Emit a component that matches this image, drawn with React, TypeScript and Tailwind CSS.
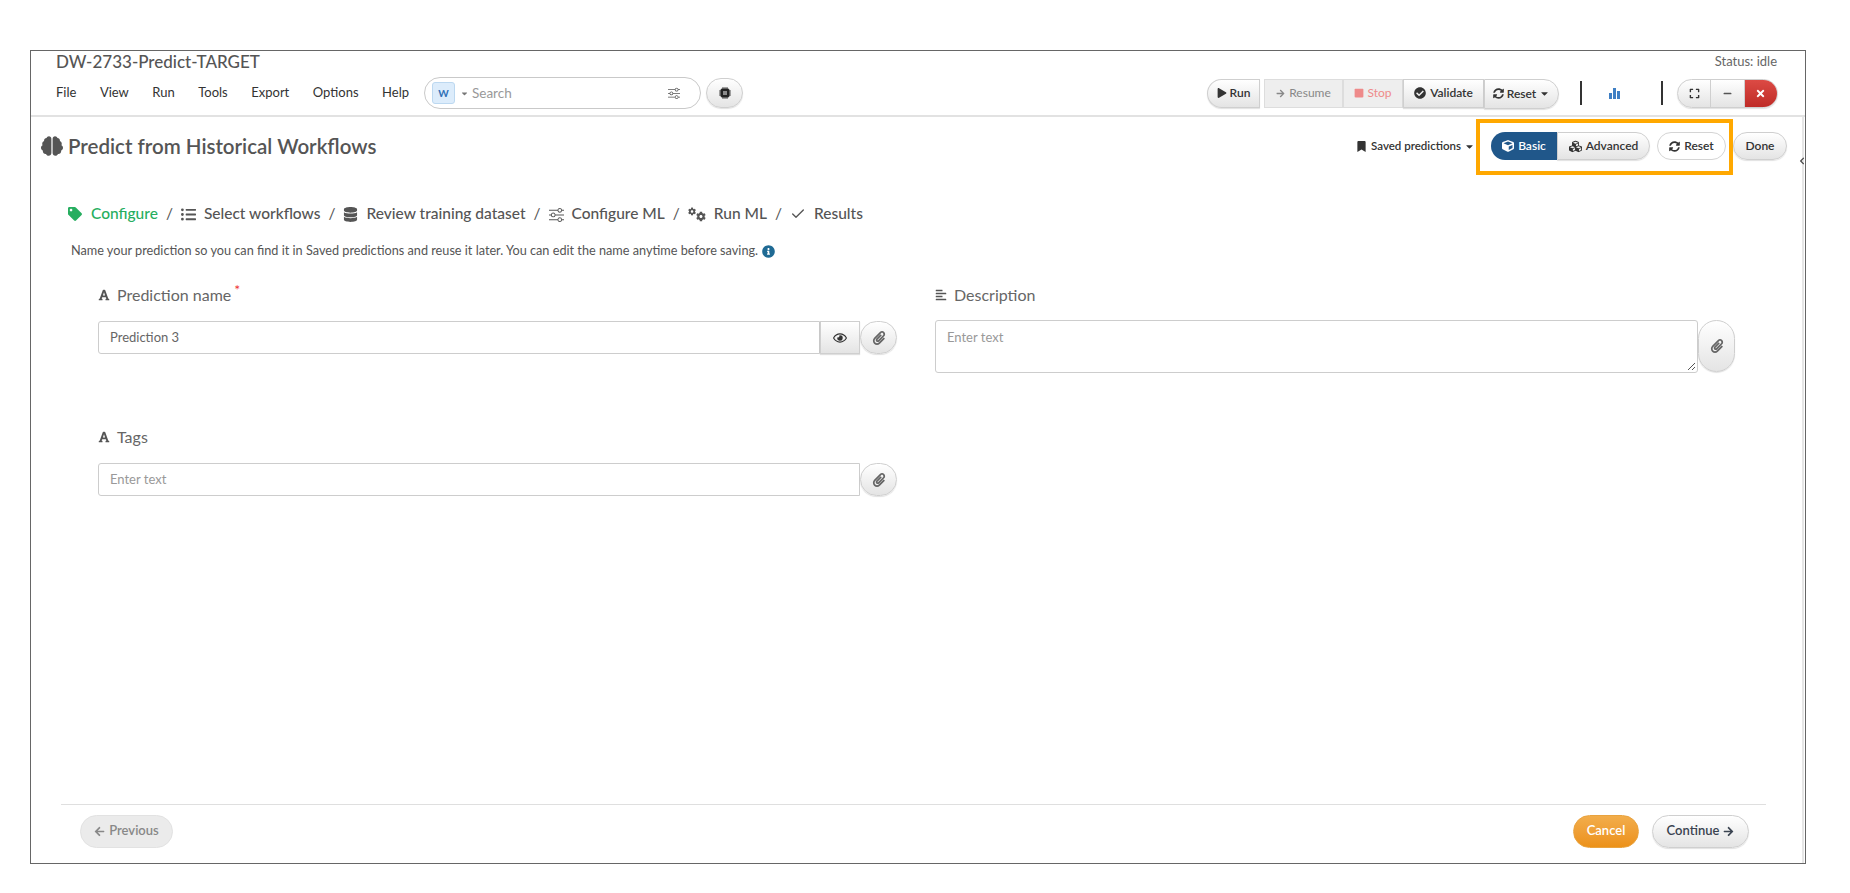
import { Check } from 'lucide-react';
import { BsSliders } from 'react-icons/bs';
import { FaAlignLeft, FaArrowLeft, FaArrowRight, FaBookmark, FaBrain, FaCaretDown, FaCheckCircle, FaChevronLeft, FaCog, FaCube, FaCubes, FaDatabase, FaExpand, FaFont, FaInfoCircle, FaListUl, FaMinus, FaPaperclip, FaPlay, FaRegEye, FaSquare, FaSyncAlt, FaTag, FaTimes } from 'react-icons/fa';

const menuItems = ['File', 'View', 'Run', 'Tools', 'Export', 'Options', 'Help'];

const steps = [
  { label: 'Select workflows', icon: <FaListUl /> },
  { label: 'Review training dataset', icon: <FaDatabase /> },
  { label: 'Configure ML', icon: <BsSliders /> },
  {
    label: 'Run ML',
    icon: (
      <span className="flex h-[15px] w-[18px]">
        <FaCog className="text-[9px] self-start" />
        <FaCog className="text-[11px] self-end" />
      </span>
    ),
  },
  { label: 'Results', icon: <Check size={16} strokeWidth={2} /> },
];

const glossy = 'bg-gradient-to-b from-white to-[#e4e4e4] border border-[#cfcfcf] shadow-[0_1px_1px_rgba(0,0,0,0.12)]';

const ClipButton = ({ tall }: { tall?: boolean }) => (
  <button className={`w-[37px] ${tall ? 'h-[52px]' : 'h-[33px]'} shrink-0 rounded-full flex items-center justify-center text-[14px] text-[#666] ${glossy}`}>
    <FaPaperclip />
  </button>
);

const FieldLabel = ({ icon, children }: { icon: React.ReactNode; children: React.ReactNode }) => (
  <div className="flex items-center gap-[7px] h-[20px] text-[16px] text-[#666]">
    <span className="text-[12px] text-[#555]">{icon}</span>
    {children}
  </div>
);

export default function App() {
  return (
    <div className="w-[1850px] h-[893px] bg-white pt-[50px] pl-[30px] overflow-hidden font-['Lato',sans-serif]">
      <div className="relative w-[1776px] h-[814px] border border-[#666] flex flex-col">
        {/* top bar */}
        <header className="h-[66px] shrink-0 border-b-2 border-[#e2e2e2] pl-[25px] pr-[28px]">
          <div className="flex items-center justify-between h-[22px]">
            <h1 className="text-[17px] font-medium text-[#555]">DW-2733-Predict-TARGET</h1>
            <span className="text-[13px] text-[#666]">Status: idle</span>
          </div>
          <div className="flex items-center h-[32px] mt-[4px]">
            <nav className="flex gap-[23.5px] text-[13px] text-[#333]">
              {menuItems.map((m) => (
                <span key={m}>{m}</span>
              ))}
            </nav>
            <div className="ml-[15px] w-[277px] h-[32px] rounded-full border border-[#c9c9c9] flex items-center pl-[7px] pr-[20px]">
              <span className="w-[23px] h-[22px] rounded-[3px] bg-[#dcecfb] border border-[#bcd8f0] flex items-center justify-center text-[10px] font-bold text-[#2f6fb5]">W</span>
              <FaCaretDown className="ml-[5px] text-[9px] text-[#777]" />
              <span className="ml-[3px] text-[13.5px] text-[#999]">Search</span>
              <BsSliders className="ml-auto text-[12px] text-[#555]" />
            </div>
            <button className={`ml-[5px] w-[37px] h-[30px] rounded-full flex items-center justify-center ${glossy}`}>
              <svg width="12" height="12" viewBox="0 0 12 12" fill="none" stroke="#222">
                <rect x="2" y="2" width="8" height="8" rx="1" fill="#222" />
                <rect x="4" y="4" width="4" height="4" fill="#8a8a8a" stroke="none" />
                <path d="M4 0v2M6 0v2M8 0v2M4 10v2M6 10v2M8 10v2M0 4h2M0 6h2M0 8h2M10 4h2M10 6h2M10 8h2" strokeWidth="0.8" />
              </svg>
            </button>
            <div className="ml-auto -mr-[1px] flex items-center h-[30px] text-[12px]">
              <button className={`h-[29px] w-[53px] rounded-l-full rounded-r-[3px] flex items-center justify-center gap-[3px] font-semibold text-[#333] ${glossy}`}>
                <FaPlay className="text-[10px]" /> Run
              </button>
              <div className="ml-[4px] flex h-[29px]">
                <button className="w-[79px] bg-[#eeeeee] border border-[#dddddd] flex items-center justify-center gap-[4px] text-[#888]">
                  <FaArrowRight className="text-[9px]" /> Resume
                </button>
                <button className="w-[60px] bg-[#eeeeee] border border-[#dddddd] flex items-center justify-center gap-[3px] text-[#ee8a8a]">
                  <FaSquare className="text-[10px]" /> Stop
                </button>
                <button className={`w-[81px] flex items-center justify-center gap-[4px] font-semibold text-[#333] ${glossy}`}>
                  <FaCheckCircle className="text-[12px]" /> Validate
                </button>
                <button className={`w-[75px] h-[30px] rounded-r-full flex items-center justify-center gap-[3px] font-semibold text-[#333] ${glossy}`}>
                  <FaSyncAlt className="text-[11px]" /> Reset <FaCaretDown className="text-[11px]" />
                </button>
              </div>
              <span className="ml-[21px] w-[2px] h-[24px] bg-[#333]" />
              <svg className="ml-[27px]" width="12" height="12" viewBox="0 0 12 12" fill="#3f7fc4">
                <rect x="0" y="6" width="3" height="6" />
                <rect x="4" y="1" width="3" height="11" />
                <rect x="8" y="4" width="3" height="8" />
              </svg>
              <span className="ml-[40px] w-[2px] h-[24px] bg-[#333]" />
              <div className={`ml-[14px] w-[101px] h-[29px] rounded-full overflow-hidden flex ${glossy}`}>
                <span className="flex-1 flex items-center justify-center text-[11px] text-[#333] border-r border-[#cfcfcf]"><FaExpand /></span>
                <span className="flex-1 flex items-center justify-center text-[9px] text-[#555] border-r border-[#cfcfcf]"><FaMinus /></span>
                <span className="flex-1 flex items-center justify-center text-[11px] text-white bg-gradient-to-b from-[#dc4a44] to-[#bf2b27]"><FaTimes /></span>
              </div>
            </div>
          </div>
        </header>

        <div className="relative flex-1 min-h-0 mr-[1px] border-r-2 border-[#e6e6e6] flex flex-col">
          {/* page heading */}
          <div className="relative flex items-center h-[58px] pl-[10px] pr-[15px] shrink-0">
            <FaBrain className="text-[22px] text-[#555]" />
            <h2 className="ml-[5px] text-[20.5px] font-semibold text-[#555]">Predict from Historical Workflows</h2>
            <div className="ml-auto flex items-center text-[11.5px] font-semibold text-[#333]">
              <FaBookmark className="text-[11px] mr-[4px]" /> Saved predictions <FaCaretDown className="ml-[3px] text-[11px]" />
              <div className="ml-[16px] flex h-[28px] text-[12px]">
                <button className="w-[66px] rounded-l-full bg-[#20578a] text-white flex items-center justify-center gap-[4px]">
                  <FaCube className="text-[12px]" /> Basic
                </button>
                <button className={`w-[93px] rounded-r-full flex items-center justify-center gap-[4px] ${glossy}`}>
                  <FaCubes className="text-[13px]" /> Advanced
                </button>
              </div>
              <button className="ml-[7px] w-[69px] h-[28px] rounded-full border border-[#d4d4d4] bg-white flex items-center justify-center gap-[4px] text-[12px]">
                <FaSyncAlt className="text-[11px]" /> Reset
              </button>
              <button className={`ml-[7px] w-[54px] h-[28px] rounded-full text-[12px] ${glossy}`}>Done</button>
            </div>
            {/* highlight box drawn over the screenshot */}
            <div className="absolute left-[1445px] top-[2px] w-[257px] h-[56px] border-4 border-[#ffa800]" />
          </div>

          {/* wizard body */}
          <main className="flex-1 min-h-0 pl-[37px] pr-[36px] flex flex-col">
            <div className="flex items-center h-[20px] mt-[29px] text-[15.5px] font-medium text-[#555]">
              <FaTag className="text-[14px] text-[#27ae60] mr-[9px]" />
              <span className="text-[#27ae60]">Configure</span>
              {steps.map((s) => (
                <span key={s.label} className="flex items-center">
                  <span className="mx-[8px] font-normal">/</span>
                  <span className="text-[15px] mr-[8px]">{s.icon}</span>
                  {s.label}
                </span>
              ))}
            </div>
            <p className="mt-[17px] h-[20px] flex items-center gap-[4px] text-[12.7px] text-[#555] pl-[3px]">
              Name your prediction so you can find it in Saved predictions and reuse it later. You can edit the name anytime before saving.
              <FaInfoCircle className="text-[13px] text-[#1f6a94]" />
            </p>

            <div className="grid grid-cols-[837px_800px] mt-[24px] pl-[30px]">
              <div>
                <div className="relative w-fit">
                  <FieldLabel icon={<FaFont />}>Prediction name</FieldLabel>
                  <span className="absolute -right-[9px] -top-[6px] text-[14px] text-[#e33]">*</span>
                </div>
                <div className="mt-[16px] flex h-[33px] w-[799px]">
                  <div className="flex-1 rounded-l-[3px] border border-[#cdcdcd] flex items-center pl-[11px] text-[13px] text-[#666]">Prediction 3</div>
                  <span className={`w-[40px] flex items-center justify-center text-[14px] text-[#333] ${glossy}`}><FaRegEye /></span>
                  <ClipButton />
                </div>
                <div className="mt-[73px]">
                  <FieldLabel icon={<FaFont />}>Tags</FieldLabel>
                </div>
                <div className="mt-[16px] flex h-[33px] w-[799px]">
                  <div className="flex-1 rounded-l-[3px] border border-[#cdcdcd] flex items-center pl-[11px] text-[13px] text-[#999]">Enter text</div>
                  <ClipButton />
                </div>
              </div>
              <div>
                <FieldLabel icon={<FaAlignLeft />}>Description</FieldLabel>
                <div className="mt-[15px] flex items-start w-[800px]">
                  <div className="w-[763px] h-[53px] rounded-[3px] border border-[#cdcdcd] pl-[11px] pt-[7px] text-[13px] text-[#999] relative">
                    Enter text
                    <svg className="absolute right-[1px] bottom-[1px]" width="9" height="9" viewBox="0 0 9 9" stroke="#555" strokeWidth="1">
                      <path d="M1 8 8 1M5 8 8 5" />
                    </svg>
                  </div>
                  <ClipButton tall />
                </div>
              </div>
            </div>

            <footer className="mt-auto mb-[16px] -ml-[7px] border-t border-[#dfdfdf] pt-[10px] pl-[19px] pr-[17px] flex items-center h-[43px] text-[13px] font-semibold">
              <button className="w-[93px] h-[33px] rounded-full bg-[#ebebeb] border border-[#e2e2e2] text-[#888] flex items-center justify-center gap-[4px]">
                <FaArrowLeft className="text-[11px]" /> Previous
              </button>
              <button className="ml-auto w-[66px] h-[33px] rounded-full bg-gradient-to-b from-[#f2ad4a] to-[#ec9117] border border-[#e9a33f] text-white">Cancel</button>
              <button className={`ml-[13px] w-[97px] h-[33px] rounded-full text-[#3a4350] flex items-center justify-center gap-[4px] ${glossy}`}>
                Continue <FaArrowRight className="text-[11px]" />
              </button>
            </footer>
          </main>
        </div>
        {/* collapse handle sitting on the frame */}
        <FaChevronLeft className="absolute -right-[1px] top-[106px] text-[8px] text-[#444]" />
      </div>
    </div>
  );
}
